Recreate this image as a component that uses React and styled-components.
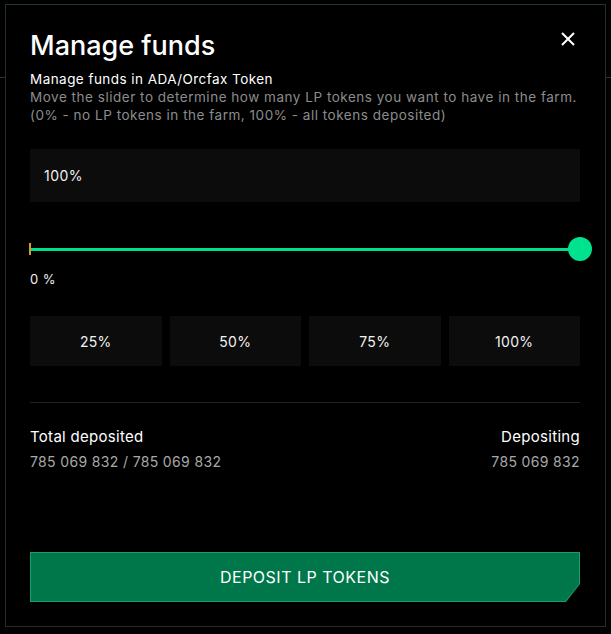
import React from "react";
import styled, { createGlobalStyle } from "styled-components";

const Global = createGlobalStyle`
  html, body { margin: 0; padding: 0; background: #000; }
  body { font-family: Inter, "Noto Sans", sans-serif; color: #fff; }
  * { box-sizing: border-box; }
`;

const Page = styled.div`
  position: relative;
  width: 611px;
  height: 634px;
  overflow: hidden;
  background: #000;
`;

const BgRow = styled.div`
  display: flex;
  gap: 250px;
  padding: 0 0 0 50px;
  margin-top: 621px;
  font-size: 15px;
  color: #7a7a7a;
`;

const BgLine = styled.div`
  height: 1px;
  background: #12402e;
  margin-top: 77px;
`;

const Overlay = styled.div`
  position: absolute;
  inset: 0;
`;

const Modal = styled.div`
  position: absolute;
  top: 4px;
  left: 5px;
  width: 601px;
  height: 623px;
  background: #000;
  border: 1px solid #2a2a2a;
  border-top-color: #1f3b31;
  padding: 23px 25px 24px 24px;
  display: flex;
  flex-direction: column;
  letter-spacing: 0.45px;
`;

const Header = styled.div`
  display: flex;
  justify-content: space-between;
  align-items: flex-start;
`;

const Title = styled.h1`
  margin: 0;
  font-size: 27px;
  line-height: 36px;
  font-weight: 500;
  letter-spacing: 0;
  color: #fff;
`;

const Close = styled.button`
  background: none;
  border: 0;
  padding: 0;
  margin: 4px 5px 0 0;
  width: 14px;
  height: 14px;
  display: flex;
  cursor: pointer;
`;

const Subtitle = styled.div`
  margin-top: 6px;
  font-size: 13.5px;
  line-height: 18px;
  color: #fff;
`;

const Hint = styled.div`
  font-size: 13.5px;
  line-height: 18px;
  letter-spacing: 0.52px;
  color: #8c8c8c;
`;

const InputBox = styled.div`
  margin-top: 25px;
  height: 53px;
  background: #0c0c0c;
  display: flex;
  align-items: center;
  padding-left: 14px;
  font-size: 14px;
  color: #f0f0f0;
`;

const SliderWrap = styled.div`
  position: relative;
  margin-top: 35px;
  height: 24px;
  display: flex;
  align-items: center;
`;

const Track = styled.div`
  width: 100%;
  height: 3px;
  background: #00e08c;
`;

const StartTick = styled.div`
  position: absolute;
  left: -1px;
  top: 6px;
  width: 2px;
  height: 12px;
  background: #d99a2b;
`;

const Thumb = styled.div`
  position: absolute;
  right: -12px;
  top: 0;
  width: 24px;
  height: 24px;
  border-radius: 50%;
  background: #00e38e;
`;

const MinLabel = styled.div`
  margin-top: 10px;
  font-size: 13px;
  line-height: 16px;
  color: #f0f0f0;
`;

const Presets = styled.div`
  margin-top: 29px;
  display: grid;
  grid-template-columns: repeat(4, 1fr);
  gap: 8px;
`;

const Preset = styled.button`
  height: 50px;
  background: #0c0c0c;
  border: 0;
  color: #f2f2f2;
  font-family: inherit;
  font-size: 14px;
  letter-spacing: 0.3px;
  cursor: pointer;
`;

const Divider = styled.div`
  margin-top: 36px;
  height: 1px;
  background: #222;
`;

const Stats = styled.div`
  margin-top: 24px;
  display: flex;
  justify-content: space-between;
`;

const Stat = styled.div`
  display: flex;
  flex-direction: column;
  gap: 6px;
  align-items: ${(p) => (p.$right ? "flex-end" : "flex-start")};
`;

const StatLabel = styled.div`
  font-size: 15px;
  line-height: 20px;
  letter-spacing: 0.3px;
  color: #fff;
`;

const StatValue = styled.div`
  font-size: 14px;
  line-height: 18px;
  letter-spacing: 0.35px;
  color: #a8a8a8;
`;

const ActionOuter = styled.div`
  margin-top: auto;
  padding: 1px;
  background: #17a06c;
  clip-path: polygon(0 0, 100% 0, 100% 32px, calc(100% - 14px) 100%, 0 100%);
`;

const Action = styled.button`
  width: 100%;
  height: 48px;
  border: 0;
  background: #00774b;
  color: #fff;
  font-family: inherit;
  font-size: 16px;
  letter-spacing: 0.5px;
  text-transform: uppercase;
  cursor: pointer;
  clip-path: polygon(0 0, 100% 0, 100% 31px, calc(100% - 13.5px) 100%, 0 100%);
`;

export default function App() {
  return (
    <Page>
      <Global />
      <BgLine />
      <BgRow>
        <span>77 239 %</span>
        <span>⚡ 20 000 WRT</span>
      </BgRow>
      <Overlay>
        <Modal>
          <Header>
            <Title>Manage funds</Title>
            <Close aria-label="close">
              <svg width="14" height="14" viewBox="0 0 14 14">
                <path d="M1 1L13 13M13 1L1 13" stroke="#fff" strokeWidth="2" />
              </svg>
            </Close>
          </Header>
          <Subtitle>Manage funds in ADA/Orcfax Token</Subtitle>
          <Hint>
            Move the slider to determine how many LP tokens you want to have in the farm.
            <br />
            (0% - no LP tokens in the farm, 100% - all tokens deposited)
          </Hint>
          <InputBox>100%</InputBox>
          <SliderWrap>
            <Track />
            <StartTick />
            <Thumb />
          </SliderWrap>
          <MinLabel>0 %</MinLabel>
          <Presets>
            {["25%", "50%", "75%", "100%"].map((p) => (
              <Preset key={p}>{p}</Preset>
            ))}
          </Presets>
          <Divider />
          <Stats>
            <Stat>
              <StatLabel>Total deposited</StatLabel>
              <StatValue>785 069 832 / 785 069 832</StatValue>
            </Stat>
            <Stat $right>
              <StatLabel>Depositing</StatLabel>
              <StatValue>785 069 832</StatValue>
            </Stat>
          </Stats>
          <ActionOuter>
            <Action>Deposit LP tokens</Action>
          </ActionOuter>
        </Modal>
      </Overlay>
    </Page>
  );
}
